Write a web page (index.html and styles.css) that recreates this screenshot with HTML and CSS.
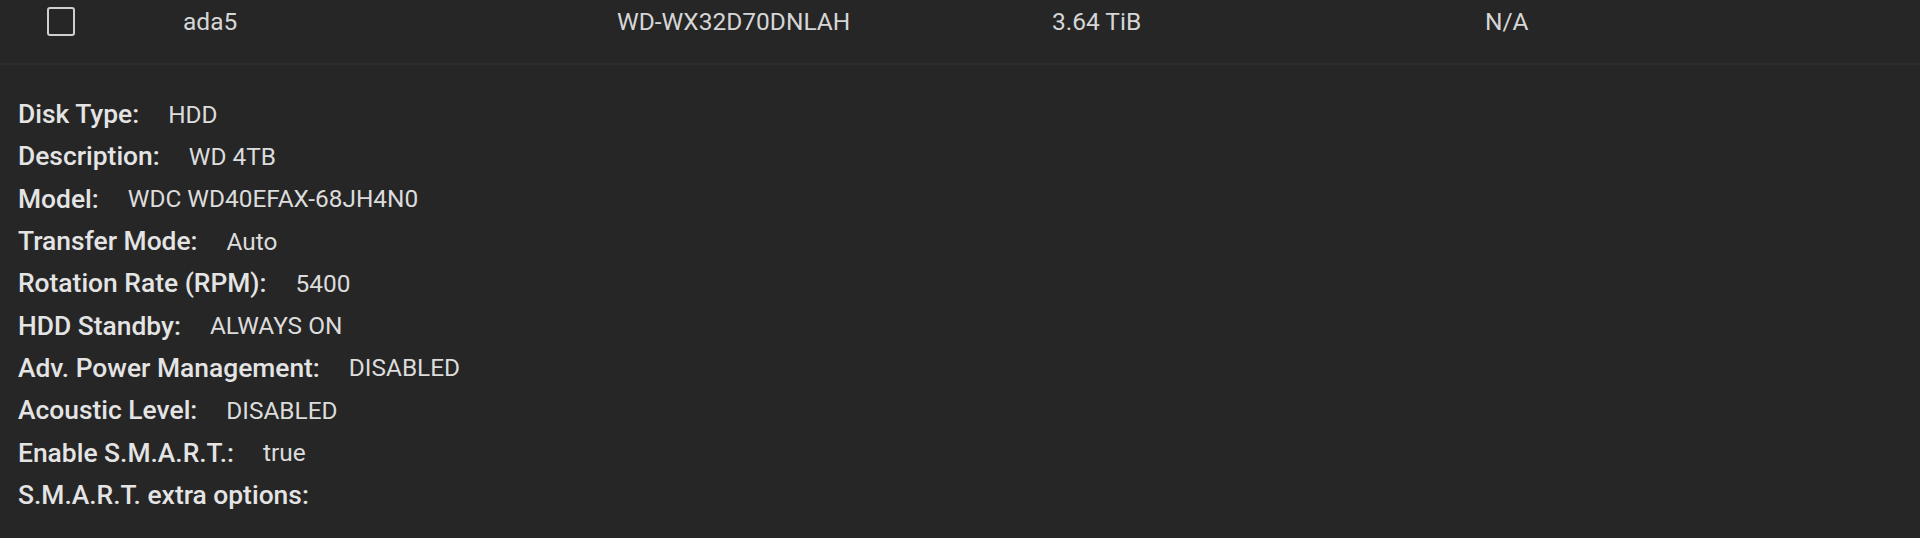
FILE: index.html
```html
<!DOCTYPE html>
<html>
<head>
<meta charset="utf-8">
<link rel="stylesheet" href="styles.css">
</head>
<body>
<div class="row">
  <div class="cell cell-check"><span class="checkbox"></span></div>
  <div class="cell cell-name">ada5</div>
  <div class="cell cell-serial">WD-WX32D70DNLAH</div>
  <div class="cell cell-size">3.64 TiB</div>
  <div class="cell cell-pool">N/A</div>
</div>
<div class="details">
  <div class="item"><span class="label">Disk Type:</span><span class="value">HDD</span></div>
  <div class="item"><span class="label">Description:</span><span class="value">WD 4TB</span></div>
  <div class="item"><span class="label">Model:</span><span class="value">WDC WD40EFAX-68JH4N0</span></div>
  <div class="item"><span class="label">Transfer Mode:</span><span class="value">Auto</span></div>
  <div class="item"><span class="label">Rotation Rate (RPM):</span><span class="value">5400</span></div>
  <div class="item"><span class="label">HDD Standby:</span><span class="value">ALWAYS ON</span></div>
  <div class="item"><span class="label">Adv. Power Management:</span><span class="value">DISABLED</span></div>
  <div class="item"><span class="label">Acoustic Level:</span><span class="value">DISABLED</span></div>
  <div class="item"><span class="label">Enable S.M.A.R.T.:</span><span class="value">true</span></div>
  <div class="item"><span class="label">S.M.A.R.T. extra options:</span><span class="value"></span></div>
</div>
</body>
</html>
```
FILE: styles.css
```css
html, body {
  margin: 0;
  padding: 0;
  background: #262626;
  font-family: Roboto, "Liberation Sans", sans-serif;
}
.row {
  display: flex;
  align-items: center;
  border-bottom: 2px solid #2d2d2d;
  padding-bottom: 20px;
  box-sizing: border-box;
  height: 65px;
  color: #d6d6d6;
  font-size: 24.5px;
}
.cell-check {
  width: 47px;
  margin-left: 47px;
  margin-right: 89px;
  display: flex;
}
.checkbox {
  width: 24px;
  height: 25px;
  border: 2px solid #cfcfcf;
  border-radius: 3px;
}
.cell-name { width: 434px; }
.cell-serial { width: 435px; }
.cell-size { width: 433px; }
.cell-pool { width: 300px; }
.details {
  padding: 28px 18px 0;
  color: #e4e4e4;
}
.item {
  height: 42.3px;
  display: flex;
  align-items: center;
}
.label {
  font-weight: 500;
  font-size: 26.4px;
  margin-right: 29px;
}
.value {
  color: #dcdcdc;
  font-weight: 400;
  font-size: 24.4px;
}
```
